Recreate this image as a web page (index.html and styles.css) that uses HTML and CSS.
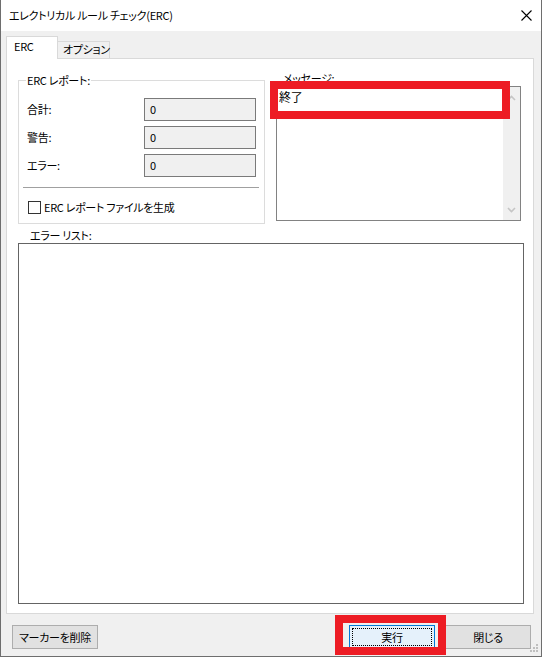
FILE: index.html
```html
<!DOCTYPE html>
<html lang="ja">
<head>
<meta charset="utf-8">
<title>エレクトリカル ルール チェック(ERC)</title>
<link rel="stylesheet" href="styles.css">
</head>
<body>
<div class="window">
  <div class="titlebar">
    <span class="title">エレクトリカル ルール チェック(ERC)</span>
    <svg class="close" width="11" height="11" viewBox="0 0 11 11"><path d="M0.5 0.5L10.5 10.5M10.5 0.5L0.5 10.5" stroke="#000" stroke-width="1.1" fill="none"/></svg>
  </div>
  <div class="client">
    <div class="tabs">
      <div class="tab active">ERC</div>
      <div class="tab">オプション</div>
    </div>
    <div class="panel">
      <div class="top">
        <fieldset class="group">
          <legend>ERC レポート:</legend>
          <div class="rows">
            <div class="row"><span class="lbl">合計:</span><div class="field">0</div></div>
            <div class="row"><span class="lbl">警告:</span><div class="field">0</div></div>
            <div class="row"><span class="lbl">エラー:</span><div class="field">0</div></div>
          </div>
          <div class="sep"></div>
          <div class="check"><span class="box"></span><span>ERC レポート ファイルを生成</span></div>
        </fieldset>
        <div class="msg">
          <div class="msglabel">メッセージ:</div>
          <div class="msgbox">
            <div class="msgtext">終了</div>
            <div class="vscroll">
              <svg width="9" height="6" viewBox="0 0 9 6"><path d="M1 5L4.5 1.5L8 5" stroke="#c5c5c5" stroke-width="1.6" fill="none"/></svg>
              <svg width="9" height="6" viewBox="0 0 9 6"><path d="M1 1L4.5 4.5L8 1" stroke="#c5c5c5" stroke-width="1.6" fill="none"/></svg>
            </div>
          </div>
        </div>
      </div>
      <div class="errlabel">エラー リスト:</div>
      <div class="errlist"></div>
    </div>
    <div class="buttons">
      <div class="btn wide">マーカーを削除</div>
      <div class="spacer"></div>
      <div class="btn default"><span class="focus">実行</span></div>
      <div class="btn">閉じる</div>
    </div>
  </div>
  <div class="mark mark-msg"></div>
  <div class="mark mark-run"></div>
  <svg class="grip" width="10" height="10" viewBox="0 0 10 10">
    <rect x="7" y="0" width="2" height="2" fill="#bfbfbf"/>
    <rect x="4" y="3" width="2" height="2" fill="#bfbfbf"/>
    <rect x="7" y="3" width="2" height="2" fill="#bfbfbf"/>
    <rect x="1" y="6" width="2" height="2" fill="#bfbfbf"/>
    <rect x="4" y="6" width="2" height="2" fill="#bfbfbf"/>
    <rect x="7" y="6" width="2" height="2" fill="#bfbfbf"/>
  </svg>
</div>
</body>
</html>
```
FILE: styles.css
```css
* { box-sizing: border-box; }
html, body { margin: 0; padding: 0; }
body {
  width: 542px;
  height: 657px;
  overflow: hidden;
  background: #fff;
  font-family: "Noto Sans CJK JP", "Noto Sans", sans-serif;
  font-size: 11px;
  letter-spacing: -0.3px;
  font-feature-settings: "palt" 1;
  color: #000;
  white-space: nowrap;
}
.window {
  position: relative;
  width: 542px;
  height: 657px;
  border-left: 1px solid #6e6e6e;
  border-right: 1px solid #6e6e6e;
  border-bottom: 1px solid #6e6e6e;
  display: flex;
  flex-direction: column;
}
.titlebar {
  height: 31px;
  flex: none;
  background: #fff;
  display: flex;
  align-items: center;
  padding: 0 9px 1px 8px;
}
.title { line-height: 16px; }
.close { margin-left: auto; display: block; }
.client {
  flex: 1;
  background: #f0f0f0;
  display: flex;
  flex-direction: column;
  padding: 5px 7px 0 5px;
}
.tabs {
  height: 22px;
  display: flex;
  align-items: flex-end;
  position: relative;
  z-index: 1;
}
.tab {
  height: 17px;
  width: 53px;
  border: 1px solid #d9d9d9;
  border-bottom: none;
  background: #f0f0f0;
  line-height: 15px;
  padding-left: 5px;
  margin-left: -1px;
}
.tab.active {
  height: 23px;
  width: 52px;
  margin-left: 0;
  margin-bottom: -1px;
  background: #fff;
  padding-left: 7px;
  padding-top: 2px;
  position: relative;
  z-index: 2;
}
.panel {
  height: 556px;
  flex: none;
  border: 1px solid #d9d9d9;
  background: #fff;
  padding: 11px 9px 9px 11px;
  display: flex;
  flex-direction: column;
}
.top {
  display: flex;
  gap: 11px;
  align-items: flex-start;
}
.group {
  margin: 2px 0 0 0;
  width: 247px;
  border: 1px solid #dcdcdc;
  padding: 0 8px 9px 8px;
  min-width: 0;
}
.group legend {
  padding: 0 1px;
  margin-left: -1px;
  line-height: 16px;
}
.rows {
  margin-top: 10px;
  display: flex;
  flex-direction: column;
  gap: 5px;
}
.row {
  height: 23px;
  display: flex;
  align-items: center;
}
.lbl { flex: 1; line-height: 16px; padding-bottom: 1px; }
.field {
  width: 112px;
  height: 23px;
  border: 1px solid #7a7a7a;
  background: #f0f0f0;
  line-height: 20px;
  padding-left: 5px;
}
.sep {
  height: 1px;
  background: #a0a0a0;
  margin: 10px -3px 0 -4px;
}
.check {
  margin-top: 13px;
  height: 13px;
  display: flex;
  align-items: center;
  gap: 3px;
  margin-left: 1px;
  line-height: 13px;
}
.box {
  width: 13px;
  height: 13px;
  border: 1px solid #333;
  background: #fff;
  flex: none;
}
.msg { width: 245px; }
.msglabel {
  line-height: 16px;
  padding-left: 7px;
}
.msgbox {
  height: 135px;
  border: 1px solid #828282;
  display: flex;
  background: #fff;
}
.msgtext {
  flex: 1;
  padding: 2px 0 0 2px;
  line-height: 16px;
  font-size: 12px;
}
.vscroll {
  width: 17px;
  background: #f0f0f0;
  display: flex;
  flex-direction: column;
  justify-content: space-between;
  align-items: center;
  padding: 8px 0 7px;
}
.vscroll svg { display: block; }
.errlabel {
  margin-top: 4px;
  line-height: 15px;
  padding-left: 12px;
}
.errlist {
  flex: 1;
  width: 506px;
  border: 1px solid #646464;
  background: #fff;
}
.buttons {
  display: flex;
  margin: 11px 3px 0 6px;
  gap: 10px;
}
.spacer { flex: 1; }
.btn {
  width: 86px;
  height: 24px;
  border: 1px solid #adadad;
  background: #e1e1e1;
  display: flex;
  align-items: center;
  justify-content: center;
  line-height: 16px;
  padding-bottom: 1px;
}
.btn.default {
  border-color: #0078d7;
  background: #e5f1fb;
  padding: 2px;
}
.focus {
  flex: 1;
  align-self: stretch;
  border: 1px dotted #000;
  display: flex;
  align-items: center;
  justify-content: center;
  padding-bottom: 1px;
}
.mark {
  position: absolute;
  border: 8px solid #ed1c24;
}
.mark-msg { left: 269px; top: 81px; width: 240px; height: 38px; }
.mark-run { left: 334px; top: 615px; width: 111px; height: 40px; }
.grip { position: absolute; right: 2px; bottom: 2px; }
```
